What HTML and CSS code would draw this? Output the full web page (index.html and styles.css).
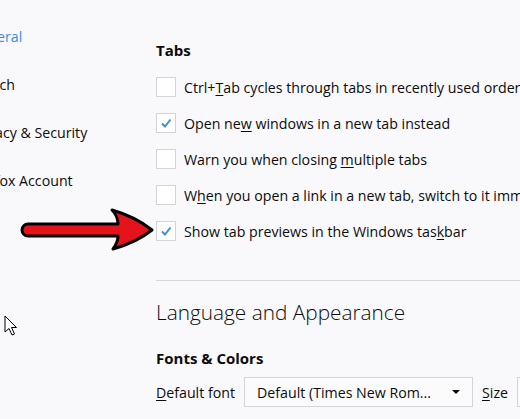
FILE: index.html
```html
<!DOCTYPE html>
<html>
<head>
<meta charset="utf-8">
<link rel="stylesheet" href="styles.css">
</head>
<body>
<div class="page">
  <nav class="sidebar">
    <div class="nav-item active">General</div>
    <div class="nav-item">Search</div>
    <div class="nav-item">Privacy &amp; Security</div>
    <div class="nav-item">Firefox Account</div>
  </nav>
  <main class="main">
    <h2 class="group-title">Tabs</h2>
    <div class="options">
      <label class="option"><span class="box"></span><span class="label">Ctrl+<u>T</u>ab cycles through tabs in recently used order</span></label>
      <label class="option"><span class="box checked"><svg viewBox="0 0 20 20" width="20" height="20"><path d="M6 10.5 L9 13.5 L14.5 6.5" fill="none" stroke="#3f8fd2" stroke-width="2"/></svg></span><span class="label">Open ne<u>w</u> windows in a new tab instead</span></label>
      <label class="option"><span class="box"></span><span class="label">Warn you when closing <u>m</u>ultiple tabs</span></label>
      <label class="option"><span class="box"></span><span class="label">W<u>h</u>en you open a link in a new tab, switch to it immediately</span></label>
      <label class="option"><span class="box checked"><svg viewBox="0 0 20 20" width="20" height="20"><path d="M6 10.5 L9 13.5 L14.5 6.5" fill="none" stroke="#3f8fd2" stroke-width="2"/></svg></span><span class="label">Show tab previews in the Windows tas<u>k</u>bar</span></label>
    </div>
    <hr class="sep">
    <h1 class="section-title">Language and Appearance</h1>
    <h2 class="group-title fonts">Fonts &amp; Colors</h2>
    <div class="font-row">
      <span class="field-label"><u>D</u>efault font</span>
      <div class="select"><span class="select-text">Default (Times New Rom...</span><span class="caret"></span></div>
      <span class="field-label size"><u>S</u>ize</span>
      <div class="select small"></div>
    </div>
  </main>
</div>
<svg class="red-arrow" width="160" height="60" viewBox="0 200 160 60">
  <path d="M28 224 L118 224 C118 219 115 213 112 210 C126 214 142 222 152 230 C142 238 127 245 113 249 C116 245 118 240 118 236 L28 236 A6 6 0 0 1 28 224 Z" fill="#e5141c" stroke="#000" stroke-width="3" stroke-linejoin="round"/>
</svg>
<svg class="cursor" width="14" height="22" viewBox="0 0 14 22">
  <path d="M1 1 L1 17 L5 13.5 L8 20 L10.5 19 L7.5 12.5 L12.5 12.5 Z" fill="#fff" stroke="#000" stroke-width="1" stroke-linejoin="round"/>
</svg>
</body>
</html>
```
FILE: styles.css
```css
html, body {
  margin: 0;
  padding: 0;
  background: #f9f9fb;
  overflow: hidden;
}
body {
  width: 520px;
  height: 419px;
  position: relative;
  font-family: "Open Sans", "Noto Sans", sans-serif;
  color: #0c0c0d;
}
.page {
  display: flex;
}
.sidebar {
  width: 156px;
  flex: none;
  padding-top: 13px;
  overflow: hidden;
}
.nav-item {
  height: 48px;
  line-height: 48px;
  font-size: 14.2px;
  margin-left: -30px;
  white-space: nowrap;
  color: #0c0c0d;
}
.nav-item.active {
  color: #3a8fd8;
}
.main {
  flex: 1;
  min-width: 0;
  padding-top: 38px;
  white-space: nowrap;
}
.group-title {
  margin: 0;
  font-size: 15px;
  font-weight: 700;
  line-height: 24px;
}
.options {
  display: flex;
  flex-direction: column;
  margin-top: 7px;
}
.option {
  display: flex;
  align-items: center;
  gap: 8px;
  height: 36px;
  font-size: 14.2px;
}
.box {
  width: 18px;
  height: 18px;
  border: 1px solid #d4d4d8;
  background: #fff;
  flex: none;
  position: relative;
}
.box svg {
  position: absolute;
  left: -1px;
  top: -1px;
}
.label u, .field-label u {
  text-decoration-thickness: 1px;
  text-underline-offset: 2px;
}
.sep {
  border: none;
  border-top: 1px solid #d7d7db;
  margin: 31px 0 0 0;
  height: 0;
}
.section-title {
  margin: 16px 0 0 0;
  font-size: 20.8px;
  font-weight: 300;
  line-height: 30px;
}
.fonts {
  margin-top: 19px;
}
.font-row {
  display: flex;
  align-items: center;
  margin-top: 7px;
  font-size: 14.2px;
}
.field-label {
  margin-right: 9px;
}
.select {
  width: 203px;
  height: 28px;
  border: 1px solid #d4d4d8;
  background: #fbfbfb;
  display: flex;
  align-items: center;
  padding: 0 12px;
  box-sizing: content-box;
  flex: none;
  margin-right: 9px;
}
.select-text {
  flex: 1;
}
.caret {
  width: 0;
  height: 0;
  border-left: 4px solid transparent;
  border-right: 4px solid transparent;
  border-top: 4px solid #0c0c0d;
}
.select.small {
  width: 60px;
}
.red-arrow {
  position: absolute;
  left: 0;
  top: 200px;
}
.cursor {
  position: absolute;
  left: 4px;
  top: 315px;
}
```
